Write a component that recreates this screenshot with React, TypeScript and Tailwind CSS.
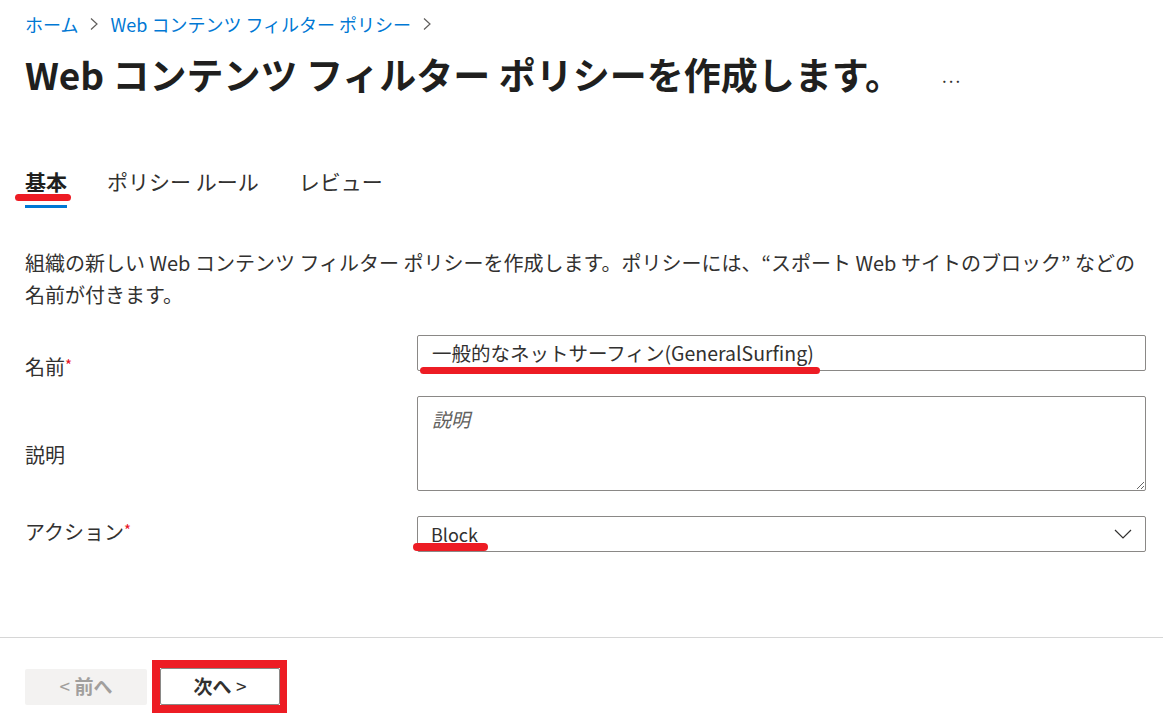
const FONT = "font-['Segoe_UI','Noto_Sans_CJK_JP',sans-serif]"

function Crumb({ children }: { children: React.ReactNode }) {
  return <span className="text-[#0078d4]">{children}</span>
}

function Sep() {
  return (
    <svg width="10" height="14" viewBox="0 0 10 14" className="mx-[11px]">
      <path d="M2 1.5 L8 7 L2 12.5" fill="none" stroke="#605e5c" strokeWidth="1.2" />
    </svg>
  )
}

function Mark({ className }: { className: string }) {
  // red marker annotation
  return <div className={`absolute rounded-full bg-[#ed1c24] ${className}`} />
}

function Req() {
  return <span className="relative top-[-4px] text-[15px] text-[#e81123]">*</span>
}

export default function App() {
  return (
    <div className={`${FONT} relative h-[724px] w-[1163px] overflow-hidden bg-white text-[#323130]`}>
      {/* breadcrumb */}
      <div className="flex items-center px-[25px] pt-[11px] text-[18px] leading-[26px]">
        <Crumb>ホーム</Crumb>
        <Sep />
        <Crumb>Web コンテンツ フィルター ポリシー</Crumb>
        <Sep />
      </div>

      {/* title */}
      <div className="flex items-center px-[25px] pt-[14px]">
        <h1 className="whitespace-nowrap text-[37px] font-bold leading-[46px] text-[#201f1e]">
          Web コンテンツ フィルター ポリシーを作成します。
        </h1>
        <span className="ml-[40px] mt-[4px] text-[17px] tracking-[2px] text-[#323130]">...</span>
      </div>

      {/* tabs */}
      <div className="relative mt-[70px] flex gap-[40px] px-[25px] text-[21px] leading-[28px]">
        <div className="relative flex flex-col">
          <span className="font-bold text-[#201f1e]">基本</span>
          <div className="mt-[10px] h-[3px] bg-[#0078d4]" />
          <Mark className="left-[-10px] top-[27px] h-[7px] w-[56px]" />
        </div>
        <span>ポリシー ルール</span>
        <span>レビュー</span>
      </div>

      {/* description */}
      <p className="mt-[39px] px-[25px] text-[20px] leading-[32px]">
        <span className="block whitespace-nowrap">
          組織の新しい Web コンテンツ フィルター ポリシーを作成します。ポリシーには、“スポート Web サイトのブロック” などの
        </span>
        <span className="block">名前が付きます。</span>
      </p>

      {/* form */}
      <div className="mt-[24px] grid grid-cols-[392px_1fr] gap-y-[25px] pl-[25px] pr-[17px] text-[20px]">
        <div className="h-[36px] pt-[20px] leading-[24px]">
          名前<Req />
        </div>
        <div className="relative">
          <div className="flex h-[36px] items-center whitespace-nowrap rounded-[2px] border border-[#8a8886] px-[14px] text-[19.5px] leading-[24px]">
            一般的なネットサーフィン(GeneralSurfing)
          </div>
          <Mark className="left-[3px] top-[32px] h-[7px] w-[400px]" />
        </div>

        <div className="pt-[47px] leading-[24px]">説明</div>
        <textarea
          placeholder="説明"
          className="h-[95px] w-full resize-y rounded-[2px] border border-[#8a8886] px-[14px] py-[9px] text-[19px] leading-[26px] outline-none placeholder:italic placeholder:text-[#605e5c]"
        />

        <div className="pt-[4px] leading-[24px]">
          アクション<Req />
        </div>
        <div className="relative">
          <div className="flex h-[36px] items-center justify-between rounded-[2px] border border-[#8a8886] pl-[13px] pr-[13px] text-[18px] leading-[24px]">
            <span>Block</span>
            <svg width="18" height="10" viewBox="0 0 18 10">
              <path d="M1 1 L9 9 L17 1" fill="none" stroke="#323130" strokeWidth="1.2" />
            </svg>
          </div>
          <Mark className="left-[-4px] top-[27px] h-[8px] w-[75px]" />
        </div>
      </div>

      {/* footer */}
      <div className="mt-[85px] h-px bg-[#d6d6d6]" />
      <div className="flex items-center gap-[5px] px-[25px] pt-[22px]">
        <button
          disabled
          className="h-[36px] w-[122px] rounded-[2px] bg-[#f3f2f1] text-[19px] font-bold text-[#a19f9d]"
        >
          <span className="font-normal">&lt;</span> 前へ
        </button>
        <div className="border-[8px] border-r-[7px] border-[#ed1c24]">
          <button className="block h-[37px] w-[120px] rounded-[2px] border border-[#8a8886] bg-white text-[19px] font-bold text-[#323130]">
            次へ <span className="font-normal">&gt;</span>
          </button>
        </div>
      </div>
    </div>
  )
}
